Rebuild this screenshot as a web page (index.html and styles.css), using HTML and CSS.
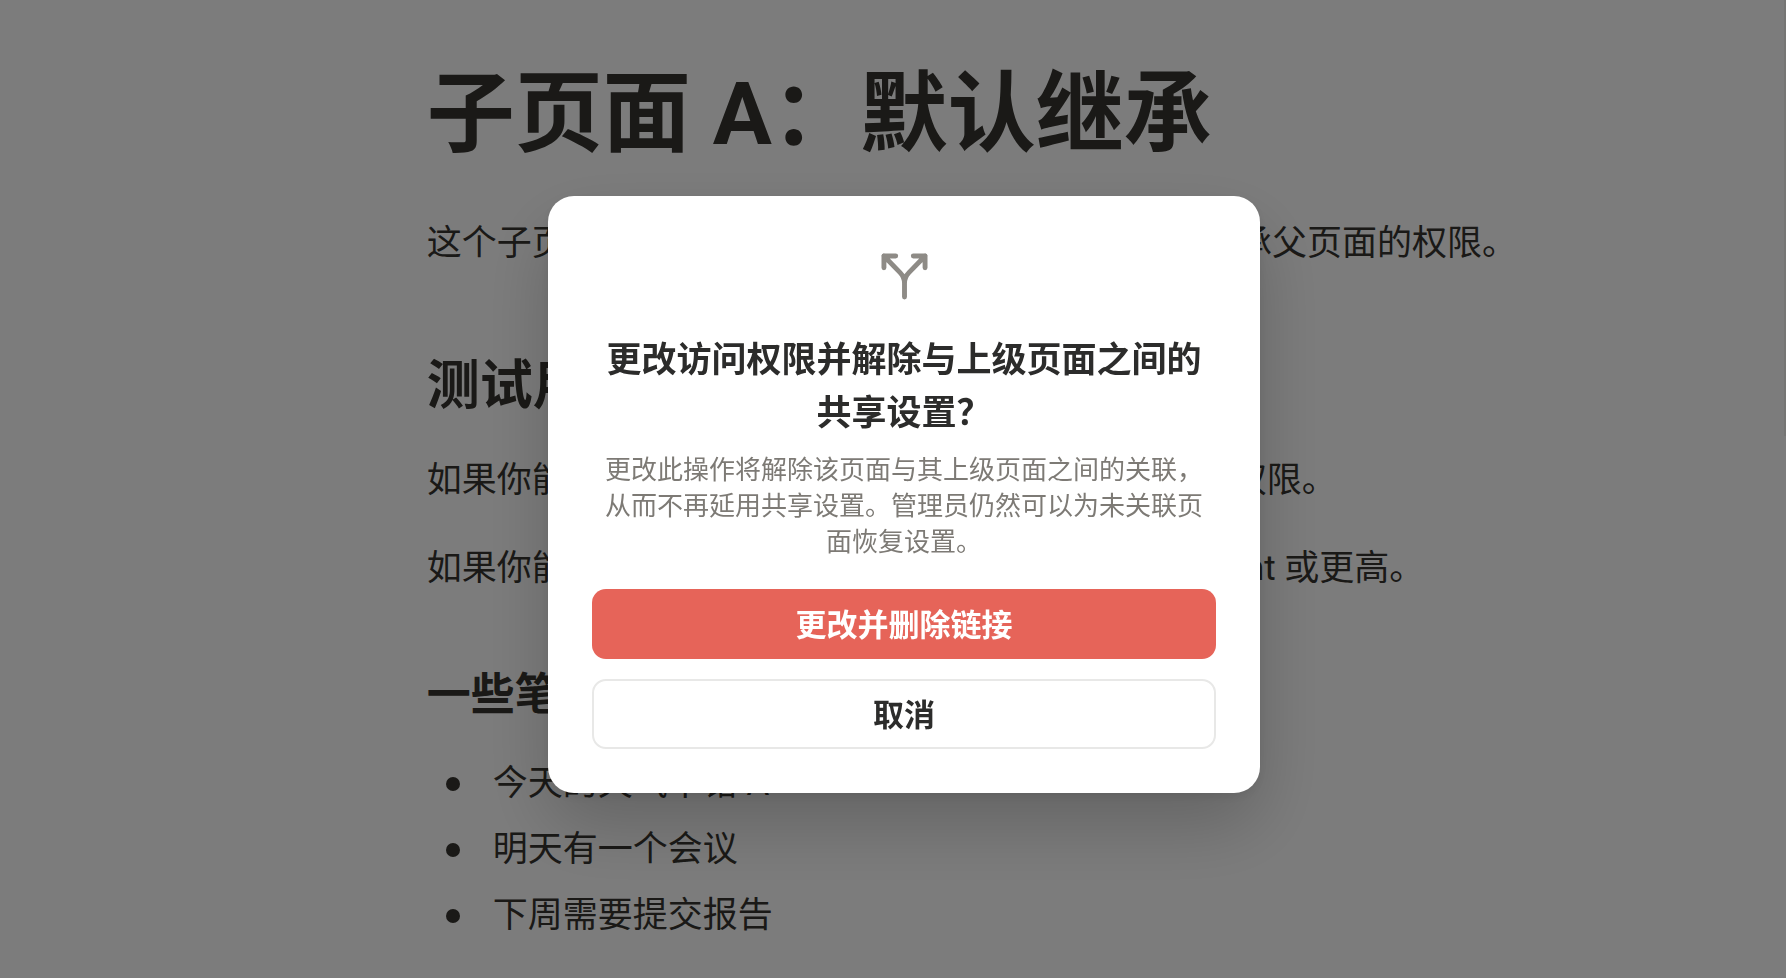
FILE: index.html
```html
<!DOCTYPE html>
<html lang="zh-CN">
<head>
  <meta charset="UTF-8">
  <title>子页面 A：默认继承</title>
  <link rel="stylesheet" href="styles.css">
</head>
<body>
  <main class="page">
    <h1 class="page-title">子页面 A：默认继承</h1>
    <p>这个子页面 A 没有单独设置权限，会在默认情况下继承父页面的权限。</p>

    <h2>测试用例</h2>
    <p>如果你能看到这里的内容，说明你已经拥有父页面的权限。</p>
    <p>如果你能在这里评论，说明你有的权限是Can comment 或更高。</p>

    <h3>一些笔记</h3>
    <ul class="notes">
      <li>今天的天气不错 A</li>
      <li>明天有一个会议</li>
      <li>下周需要提交报告</li>
    </ul>
  </main>

  <div class="scroll-thumb"></div>

  <div class="overlay">
    <div class="dialog" role="dialog" aria-modal="true" aria-labelledby="dialog-title" aria-describedby="dialog-text">
      <svg class="dialog-icon" viewBox="0 0 48 48" aria-hidden="true">
        <path d="M15 3H3V15M3 3L19.500 20Q24 24.500 24 31V45M33 3H45V15M45 3L28.500 20Q24 24.500 24 31" />
      </svg>
      <h2 class="dialog-title" id="dialog-title">更改访问权限并解除与上级页面之间的共享设置？</h2>
      <p class="dialog-text" id="dialog-text">更改此操作将解除该页面与其上级页面之间的关联，从而不再延用共享设置。管理员仍然可以为未关联页面恢复设置。</p>
      <div class="dialog-actions">
        <button class="btn btn-danger" type="button">更改并删除链接</button>
        <button class="btn btn-plain" type="button">取消</button>
      </div>
    </div>
  </div>
</body>
</html>
```
FILE: styles.css
```css
* {
  box-sizing: border-box;
}

body {
  margin: 0;
  background: #fff;
  color: #373530;
  font-family: Roboto, 'Noto Sans CJK SC', sans-serif;
  font-size: 35px;
  line-height: 52px;
  overflow: hidden;
}

h1, h2, h3, p, ul {
  margin: 0;
}

/* page behind the dialog */
.page {
  padding: 58px 0 0 23.9%;
}

.page-title {
  font-size: 88px;
  line-height: 112px;
  font-weight: 700;
  margin-bottom: 48px;
}

.page h2 {
  font-size: 53px;
  line-height: 68px;
  margin-top: 82px;
  margin-bottom: 35px;
}

.page h3 {
  font-size: 44px;
  line-height: 56px;
  margin-top: 72px;
  margin-bottom: 35px;
}

.page p + p {
  margin-top: 36px;
}

.notes {
  list-style: none;
  padding: 0;
  display: flex;
  flex-direction: column;
  gap: 14px;
}

.notes li {
  display: flex;
  align-items: center;
  gap: 33px;
  padding-left: 19px;
}

.notes li::before {
  content: '';
  width: 14px;
  height: 14px;
  border-radius: 50%;
  background: currentColor;
}

.scroll-thumb {
  position: fixed;
  top: 0;
  right: 0;
  width: 2px;
  height: 436px;
  background: #f1f1ef;
}

/* dialog */
.overlay {
  position: fixed;
  inset: 0;
  background: rgba(0, 0, 0, 0.515);
  display: flex;
  align-items: center;
  justify-content: center;
  padding: 11px 0 0 22px;
}

.dialog {
  width: 712px;
  max-width: 100%;
  padding: 57px 44px 44px;
  background: #fff;
  border-radius: 26px;
  box-shadow: 0 32px 72px rgba(0, 0, 0, 0.2), 0 4px 12px rgba(0, 0, 0, 0.08);
  text-align: center;
}

.dialog-icon {
  display: block;
  width: 47px;
  height: 47px;
  margin: 0 auto 34px;
  fill: none;
  stroke: #8e8b86;
  stroke-width: 5;
  stroke-linecap: round;
  stroke-linejoin: round;
}

.dialog-title {
  font-size: 35px;
  line-height: 53px;
  font-weight: 700;
  color: #2c2c2b;
}

.dialog-text {
  margin-top: 12px;
  padding: 0 8px;
  font-size: 26px;
  line-height: 36px;
  color: #7d7a75;
}

.dialog-actions {
  display: flex;
  flex-direction: column;
  gap: 20px;
  margin-top: 29px;
}

.btn {
  height: 70px;
  padding: 0 0 4px;
  border: 2px solid transparent;
  border-radius: 14px;
  font-family: inherit;
  font-size: 31px;
  font-weight: 700;
  cursor: pointer;
}

.btn-danger {
  background: #e66459;
  color: #fff;
}

.btn-plain {
  background: #fff;
  border-color: #e8e8e7;
  color: #2c2c2b;
}
```
